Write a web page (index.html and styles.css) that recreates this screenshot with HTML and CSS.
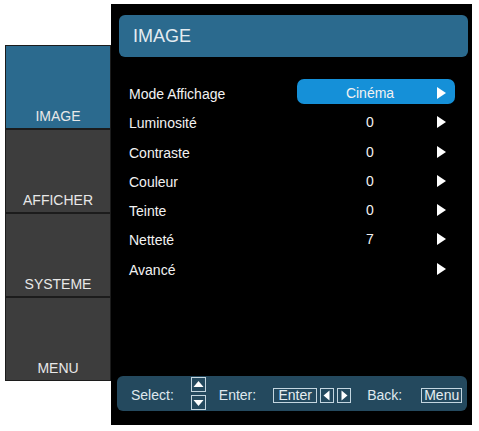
FILE: index.html
```html
<!DOCTYPE html>
<html lang="fr">
<head>
  <meta charset="UTF-8">
  <title>OSD - Image</title>
  <link rel="stylesheet" href="styles.css">
</head>
<body>
  <div class="osd">
    <!-- left tabs -->
    <div class="tabs">
      <div class="tab active">IMAGE</div>
      <div class="tab">AFFICHER</div>
      <div class="tab">SYSTEME</div>
      <div class="tab">MENU</div>
    </div>

    <!-- main panel -->
    <div class="panel">
      <div class="panel-title">IMAGE</div>

      <div class="rows">
        <div class="row">
          <span class="label">Mode Affichage</span>
          <span class="value-box selected">
            <span class="value">Cinéma</span>
            <svg class="arrow" width="9" height="12" viewBox="0 0 9 12"><polygon points="0,0 9,6 0,12" fill="#fff"/></svg>
          </span>
        </div>
        <div class="row">
          <span class="label">Luminosité</span>
          <span class="value-box">
            <span class="value">0</span>
            <svg class="arrow" width="9" height="12" viewBox="0 0 9 12"><polygon points="0,0 9,6 0,12" fill="#fff"/></svg>
          </span>
        </div>
        <div class="row">
          <span class="label">Contraste</span>
          <span class="value-box">
            <span class="value">0</span>
            <svg class="arrow" width="9" height="12" viewBox="0 0 9 12"><polygon points="0,0 9,6 0,12" fill="#fff"/></svg>
          </span>
        </div>
        <div class="row">
          <span class="label">Couleur</span>
          <span class="value-box">
            <span class="value">0</span>
            <svg class="arrow" width="9" height="12" viewBox="0 0 9 12"><polygon points="0,0 9,6 0,12" fill="#fff"/></svg>
          </span>
        </div>
        <div class="row">
          <span class="label">Teinte</span>
          <span class="value-box">
            <span class="value">0</span>
            <svg class="arrow" width="9" height="12" viewBox="0 0 9 12"><polygon points="0,0 9,6 0,12" fill="#fff"/></svg>
          </span>
        </div>
        <div class="row">
          <span class="label">Netteté</span>
          <span class="value-box">
            <span class="value">7</span>
            <svg class="arrow" width="9" height="12" viewBox="0 0 9 12"><polygon points="0,0 9,6 0,12" fill="#fff"/></svg>
          </span>
        </div>
        <div class="row">
          <span class="label">Avancé</span>
          <span class="value-box">
            <span class="value"></span>
            <svg class="arrow" width="9" height="12" viewBox="0 0 9 12"><polygon points="0,0 9,6 0,12" fill="#fff"/></svg>
          </span>
        </div>
      </div>

      <!-- key help bar -->
      <div class="help">
        <span class="help-text">Select:</span>
        <span class="updown">
          <svg width="15" height="15" viewBox="0 0 15 15"><rect x="0.5" y="0.5" width="14" height="14" fill="none" stroke="#c4d6e0"/><polygon points="2.5,10 7.5,4 12.5,10" fill="#fff"/></svg>
          <svg width="15" height="15" viewBox="0 0 15 15"><rect x="0.5" y="0.5" width="14" height="14" fill="none" stroke="#c4d6e0"/><polygon points="2.5,5 12.5,5 7.5,11" fill="#fff"/></svg>
        </span>
        <span class="help-text">Enter:</span>
        <span class="keys">
          <span class="key">Enter</span>
          <svg width="14" height="15" viewBox="0 0 14 15"><rect x="0.5" y="0.5" width="13" height="14" fill="none" stroke="#c4d6e0"/><polygon points="9.5,2.5 9.5,12.5 3.5,7.5" fill="#fff"/></svg>
          <svg width="14" height="15" viewBox="0 0 14 15"><rect x="0.5" y="0.5" width="13" height="14" fill="none" stroke="#c4d6e0"/><polygon points="4.5,2.5 4.5,12.5 10.5,7.5" fill="#fff"/></svg>
        </span>
        <span class="help-text back">Back:</span>
        <span class="key">Menu</span>
      </div>
    </div>
  </div>
</body>
</html>
```

FILE: styles.css
```css
body {
  margin: 0;
  background-color: #fff;
  font-family: "Liberation Sans", Arial, sans-serif;
}

.osd {
  display: flex;
  align-items: flex-start;
  padding: 4px 0 0 5px;
}

/* left tabs */
.tabs {
  margin-top: 41px;
  width: 104px;
  border: 1px solid #1c1c1c;
  background-color: #1c1c1c;
  display: flex;
  flex-direction: column;
  gap: 2px;
}

.tab {
  height: 82px;
  background-color: #3d3d3d;
  color: #e8e8e8;
  font-size: 14px;
  display: flex;
  align-items: flex-end;
  justify-content: center;
  padding-bottom: 4px;
  box-sizing: border-box;
}

.tab.active {
  background-color: #2b6a8e;
}

/* main panel */
.panel {
  width: 361px;
  height: 421px;
  background-color: #000;
  padding: 11px 4px 14px 8px;
  box-sizing: border-box;
  display: flex;
  flex-direction: column;
}

.panel-title {
  height: 42px;
  background-color: #2b6a8e;
  border-radius: 6px;
  color: #e4ecf1;
  font-size: 18px;
  padding-left: 14px;
  display: flex;
  align-items: center;
}

.rows {
  margin-top: 22px;
  padding-right: 13px;
}

.row {
  height: 29.3px;
  display: flex;
  align-items: flex-start;
  color: #f2f2f2;
  font-size: 14px;
}

.label {
  flex: 1;
  padding-left: 10px;
  padding-top: 7px;
}

.value-box {
  width: 158px;
  height: 25px;
  display: flex;
  align-items: center;
  padding-top: 3px;
  box-sizing: border-box;
  border-radius: 7px;
}

.value-box.selected {
  background-color: #1590d8;
}

.value {
  width: 134px;
  margin-left: 6px;
  text-align: center;
}

.arrow {
  display: block;
}

/* help bar */
.help {
  margin-top: auto;
  margin-left: -2px;
  width: 350px;
  height: 35px;
  background-color: #24495e;
  border-radius: 6px;
  display: flex;
  align-items: center;
  padding-left: 14px;
  box-sizing: border-box;
  color: #dfe8ee;
  font-size: 14px;
}

.help-text {
  margin-right: 17px;
  padding-top: 2px;
}

.help-text.back {
  margin-right: 19px;
}

.updown {
  display: flex;
  flex-direction: column;
  gap: 3px;
  margin-right: 13px;
}

.updown svg,
.keys svg {
  display: block;
}

.keys {
  display: flex;
  gap: 3px;
  margin-right: 16px;
  margin-top: 3px;
}

.key {
  height: 15px;
  border: 1px solid #c4d6e0;
  box-sizing: border-box;
  padding: 0 2px;
  font-size: 14px;
  line-height: 13px;
  color: #e6eef2;
  margin-top: 3px;
}

.keys .key {
  margin-top: 0;
  width: 44px;
  text-align: center;
}
```
